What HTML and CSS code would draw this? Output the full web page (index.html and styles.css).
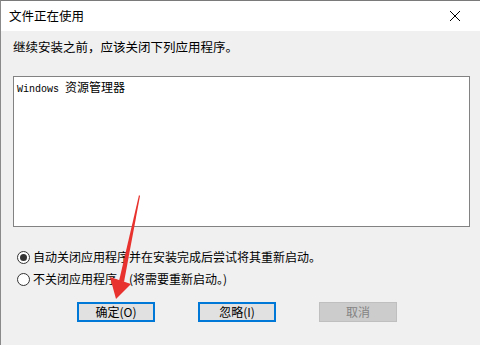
FILE: index.html
```html
<!DOCTYPE html>
<html lang="zh-CN">
<head>
  <meta charset="UTF-8" />
  <title>文件正在使用</title>
  <link rel="stylesheet" href="styles.css">
</head>
<body>
  <div class="window">
    <div class="titlebar">
      <span class="title">文件正在使用</span>
      <svg class="close" width="12" height="12" viewBox="0 0 12 12">
        <path d="M1 1 L11 11 M11 1 L1 11" stroke="#000" stroke-width="1" fill="none" />
      </svg>
    </div>

    <div class="content">
      <p class="intro">继续安装之前，应该关闭下列应用程序。</p>

      <div class="listbox">
        <div class="list-item"><span class="mono">Windows </span>资源管理器</div>
      </div>

      <div class="options">
        <label class="option"><span class="radio checked"></span>自动关闭应用程序并在安装完成后尝试将其重新启动。</label>
        <label class="option"><span class="radio"></span>不关闭应用程序。(将需要重新启动。)</label>
      </div>

      <div class="buttons">
        <button class="btn focus">确定(O)</button>
        <button class="btn focus">忽略(I)</button>
        <button class="btn disabled">取消</button>
      </div>
    </div>

    <!-- 标注箭头 -->
    <svg class="arrow" width="480" height="345" viewBox="0 0 480 345">
      <polygon points="139,195 140,196 124,282 119,281" fill="#e8322e" />
      <polygon points="110,277 131,284 116,299" fill="#e8322e" />
    </svg>
  </div>
</body>
</html>
```

FILE: styles.css
```css
* {
  box-sizing: border-box;
}
body {
  margin: 0;
  font-family: "Noto Sans CJK SC", "Noto Sans", sans-serif;
  font-size: 12px;
  color: #000;
  background: #f0f0f0;
}
.window {
  position: relative;
  width: 480px;
  height: 345px;
  border-top: 1px solid #7a7a7a;
  border-left: 1px solid #8a8a8a;
  background: #f0f0f0;
  overflow: hidden;
}
.titlebar {
  height: 30px;
  background: #fff;
  display: flex;
  align-items: center;
  justify-content: space-between;
  padding: 0 19px 0 8px;
}
.title {
  font-size: 12.5px;
  line-height: 16px;
}
.close {
  display: block;
}
.content {
  padding: 7px 10px 0 12px;
}
.intro {
  margin: 0;
  font-size: 12.5px;
  line-height: 18px;
}
.listbox {
  margin-top: 20px;
  width: 457px;
  height: 151px;
  background: #fff;
  border: 1px solid #828282;
  padding: 1px 3px;
}
.list-item {
  font-size: 12px;
  line-height: 17px;
}
.mono {
  font-family: "Liberation Mono", "DejaVu Sans Mono", monospace;
  font-size: 10px;
  white-space: pre;
}
.options {
  margin-top: 21px;
  display: flex;
  flex-direction: column;
  gap: 4px;
}
.option {
  display: flex;
  align-items: center;
  font-size: 12px;
  line-height: 18px;
}
.radio {
  width: 13px;
  height: 13px;
  border: 1px solid #333;
  border-radius: 50%;
  background: #fff;
  margin: 0 3px 0 4px;
  position: relative;
}
.radio.checked::after {
  content: "";
  position: absolute;
  left: 2px;
  top: 2px;
  width: 7px;
  height: 7px;
  border-radius: 50%;
  background: #333;
}
.buttons {
  margin-top: 14px;
  display: flex;
  gap: 43px;
  padding-left: 64px;
}
.btn {
  width: 78px;
  height: 20px;
  font-family: "Noto Sans CJK SC", sans-serif;
  font-size: 12px;
  line-height: 14px;
  padding: 0;
  background: #e1e1e1;
  border: 1px solid #adadad;
  color: #000;
}
.btn.focus {
  border: 2px solid #0078d7;
}
.btn.disabled {
  background: #cccccc;
  border-color: #bfbfbf;
  color: #838383;
}
.arrow {
  position: absolute;
  left: -1px;
  top: -1px;
  pointer-events: none;
}
```
